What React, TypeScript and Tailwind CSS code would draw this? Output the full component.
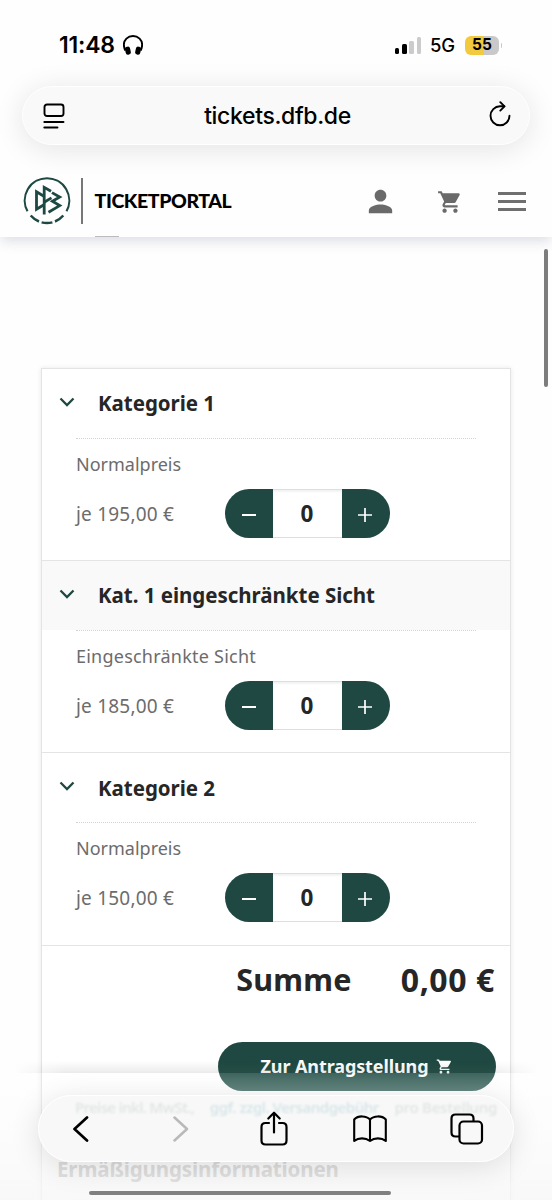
import { useState } from 'react';
import { MdPerson, MdShoppingCart } from 'react-icons/md';

type Category = {
  id: string;
  title: string;
  label: string;
  price: number;
  highlighted?: boolean;
};

const CATEGORIES: Category[] = [
  { id: 'kat1', title: 'Kategorie 1', label: 'Normalpreis', price: 195 },
  { id: 'kat1-sicht', title: 'Kat. 1 eingeschränkte Sicht', label: 'Eingeschränkte Sicht', price: 185, highlighted: true },
  { id: 'kat2', title: 'Kategorie 2', label: 'Normalpreis', price: 150 },
];

function formatPrice(value: number) {
  return `${value.toFixed(2).replace('.', ',')} €`;
}

function StatusBar() {
  return (
    <div className="flex h-[86px] items-start justify-between pl-[59px] pr-[50px] pt-[33px]">
      <div className="flex h-6 items-center gap-[5px]">
        <span className="w-[59px] whitespace-nowrap font-['Inter',sans-serif] text-[23px] font-semibold leading-6 tracking-[-0.2px]">11:48</span>
        <svg width="20" height="20" viewBox="0 0 20 20" fill="none">
          <path d="M2.3 15.5C.2 11 .7 6.5 3.4 3.7 7 .1 13 .1 16.6 3.7 19.3 6.5 19.8 11 17.7 15.5" stroke="#000" strokeWidth="1.9" />
          <rect x="2.3" y="11.7" width="5.2" height="8" rx="2.3" fill="#000" transform="rotate(-12 4.7 15.7)" />
          <rect x="12.5" y="11.7" width="5.2" height="8" rx="2.3" fill="#000" transform="rotate(12 15.3 15.7)" />
        </svg>
      </div>
      <div className="flex h-6 items-center">
        <div className="flex h-[17px] items-end gap-[2.7px]">
          <div className="h-[6px] w-[4.5px] rounded-[1.5px] bg-black" />
          <div className="h-[10px] w-[4.5px] rounded-[1.5px] bg-black" />
          <div className="h-[13px] w-[4.5px] rounded-[1.5px] bg-[#cbcbcb]" />
          <div className="h-[17px] w-[4.5px] rounded-[1.5px] bg-[#cbcbcb]" />
        </div>
        <span className="ml-[9px] w-[26px] whitespace-nowrap font-['Inter',sans-serif] text-[18.5px] font-medium leading-6 tracking-[-0.2px]">5G</span>
        <div className="ml-[9px] flex h-[19px] w-[34px] items-center justify-center rounded-[6px] bg-[linear-gradient(to_right,#f3c93e_56%,#c9c9c9_56%)] font-['Inter',sans-serif] text-[15.5px] font-bold">
          55
        </div>
        <div className="ml-[1.5px] h-[5px] w-[1.5px] rounded-r bg-[#c9c9c9]" />
      </div>
    </div>
  );
}

function AddressBar() {
  return (
    <div className="mx-[22px] flex h-[59px] items-center justify-between rounded-full border border-white bg-[#f9f9f9] pl-[20px] pr-[17px] shadow-[0_4px_30px_rgba(0,0,0,0.11)]">
      <svg width="24" height="26" viewBox="0 0 24 26" fill="none" stroke="#000" strokeWidth="1.9" strokeLinecap="round">
        <rect x="1.5" y="1.5" width="19" height="11.5" rx="2.5" />
        <path d="M1.3 19H20.5M1.3 24.5H14.5" />
      </svg>
      <span className="pt-[2px] font-['Inter',sans-serif] text-[23px] font-medium tracking-[-0.35px]">tickets.dfb.de</span>
      <svg className="-mt-[3px]" width="24" height="26" viewBox="0 0 24 26" fill="none" stroke="#000" strokeWidth="1.9" strokeLinecap="round" strokeLinejoin="round">
        <path d="M21.5 14.8A9.5 9.5 0 1 1 12 5.3H16.3" />
        <path d="M12.3 1.2L16.5 5.4 12.3 9.6" />
      </svg>
    </div>
  );
}

function DfbLogo() {
  return (
    <svg width="48" height="48" viewBox="0 0 48 48" fill="none" stroke="#1d4942">
      <path d="M4.5 34.3A22.3 22.3 0 1 1 43.5 34.3" strokeWidth="2.1" />
      <path d="M7.7 38.5A22.3 22.3 0 0 0 16 44.5M18.6 45.4A22.3 22.3 0 0 0 29.4 45.4M32 44.5A22.3 22.3 0 0 0 40.3 38.5" strokeWidth="2.5" />
      <g strokeWidth="2.8">
        <path d="M20.5 19L13.5 14.8V32.2L20.5 28" />
        <path d="M28 14.2L21.2 10.3V37.5" />
        <path d="M21.2 25.2L28.5 20.9" />
        <path d="M29 15.6L36.7 20 29.4 24.3 36.7 28.6 25.5 35.2" />
      </g>
    </svg>
  );
}

function PortalHeader() {
  return (
    <header className="relative mt-[20px] flex h-[72px] items-start justify-between bg-transparent pl-[23px] pr-[26px] shadow-[0_5px_12px_-1px_rgba(60,70,110,0.18)] [clip-path:inset(0_0_-24px_0)]">
      <div className="flex h-[72px] items-center">
        <DfbLogo />
        <div className="ml-[10px] h-[46px] w-[1.5px] bg-[#777]" />
        <span className="ml-[12px] font-['Lato',sans-serif] text-[19.5px] font-black tracking-[-0.4px]">TICKETPORTAL</span>
      </div>
      <div className="flex h-[72px] items-center text-[#6a6a6a]">
        <MdPerson size={35} />
        <MdShoppingCart size={26} className="ml-[39px] mt-[2px]" />
        <div className="ml-[35px] flex w-[28px] flex-col gap-[5px]">
          <div className="h-[3px] bg-[#6f6f6f]" />
          <div className="h-[3px] bg-[#6f6f6f]" />
          <div className="h-[3px] bg-[#6f6f6f]" />
        </div>
      </div>
      <div className="absolute bottom-0 left-[95px] h-px w-[24px] bg-[#bbb]" />
    </header>
  );
}

function Stepper({ value, onChange }: { value: number; onChange: (value: number) => void }) {
  return (
    <div className="flex h-[49px] w-[165px] overflow-hidden rounded-full">
      <button className="flex w-12 items-center justify-center bg-[#1e4841]" aria-label="Weniger" onClick={() => onChange(Math.max(0, value - 1))}>
        <span className="mt-[3px] h-[2px] w-[14px] bg-white" />
      </button>
      <div className="flex w-[69px] items-center justify-center border-y border-[#dedede] bg-white pr-px text-[22.5px] font-bold shadow-[inset_0_2px_2px_rgba(0,0,0,0.05)]">
        {value}
      </div>
      <button className="flex w-12 items-center justify-center bg-[#1e4841]" aria-label="Mehr" onClick={() => onChange(value + 1)}>
        <svg className="mr-[3px] mt-[3px]" width="14" height="14" viewBox="0 0 14 14" stroke="#fff" strokeWidth="1.7">
          <path d="M7 0V14M0 7H14" />
        </svg>
      </button>
    </div>
  );
}

function CategoryRow({ category, amount, onAmountChange }: { category: Category; amount: number; onAmountChange: (value: number) => void }) {
  return (
    <section className="h-[192.2px] border-b-[1.5px] border-[#e4e4e4]">
      <div className={category.highlighted ? 'flex h-[69px] items-center bg-[#f9f9f9] pl-[17px]' : 'flex h-[69px] items-center pl-[17px]'}>
        <svg className="mb-[3px]" width="16" height="10" viewBox="0 0 16 10" fill="none" stroke="#1e4841" strokeWidth="2.3">
          <path d="M1.5 1.5L8 8 14.5 1.5" />
        </svg>
        <h2 className="ml-[23px] whitespace-nowrap text-[20.5px] font-bold tracking-[-0.03px]">{category.title}</h2>
      </div>
      <div className="mx-[34px] border-t border-dotted border-[#d4d4d4] text-[18px] text-[#6c6c6c]">
        <div className="flex h-[50px] items-center pt-px">
          <span className={category.highlighted ? 'tracking-[0.23px]' : ''}>{category.label}</span>
        </div>
        <div className="flex h-[49px] items-center">
          <span className="w-[149px] whitespace-nowrap pt-px text-[19px] tracking-[0.2px]">je {formatPrice(category.price)}</span>
          <div className="text-[#262626]">
            <Stepper value={amount} onChange={onAmountChange} />
          </div>
        </div>
      </div>
    </section>
  );
}

function BrowserToolbar() {
  return (
    <div className="absolute inset-x-0 bottom-0 h-[127px]">
      <div className="absolute inset-x-[14px] -top-[12px] h-[12px] bg-linear-to-t from-black/8 to-transparent [mask-image:linear-gradient(to_right,transparent,black_10%,black_90%,transparent)]" />
      <div className="absolute inset-0 bg-linear-to-b from-white/10 via-[#fafafa]/50 to-[#f7f7f7]/80" />
      <nav className="absolute left-[38px] top-[22px] flex h-[67px] w-[476px] items-center overflow-hidden rounded-full border border-white bg-[#f8f8f8]/95 shadow-[0_5px_30px_rgba(0,0,0,0.12)]">
        <p className="absolute left-[36px] top-[3px] flex w-[422px] scale-y-90 justify-between whitespace-nowrap text-[15px] font-semibold leading-[18px] text-[#e3e5e5] blur-[1.2px]">
          <span className="tracking-[-0.7px]">Preise inkl. MwSt.,</span>
          <span className="tracking-[-0.5px] text-[#d8e6e8]">ggf. zzgl. Versandgebühr</span>
          <span className="tracking-[-0.3px]">pro Bestellung</span>
        </p>
        <svg className="relative ml-[33px]" width="18" height="26" viewBox="0 0 18 26" fill="none" stroke="#000" strokeWidth="2.7" strokeLinecap="round" strokeLinejoin="round">
          <path d="M15 1.5L2.5 13 15 24.5" />
        </svg>
        <svg className="relative ml-[82px]" width="18" height="26" viewBox="0 0 18 26" fill="none" stroke="#b9b9bb" strokeWidth="2.5" strokeLinecap="round" strokeLinejoin="round">
          <path d="M2.5 1.5L15 13 2.5 24.5" />
        </svg>
        <svg className="relative -top-px ml-[69px]" width="30" height="36" viewBox="0 0 30 36" fill="none" stroke="#000" strokeWidth="2.2" strokeLinecap="round" strokeLinejoin="round">
          <path d="M10 13H6.500Q2.500 13 2.500 17V30.500Q2.500 34.500 6.500 34.500H23.500Q27.500 34.500 27.500 30.500V17Q27.500 13 23.500 13H20M15 22.500V3M9.300 8.500L15 2.700 20.700 8.500" />
        </svg>
        <svg className="relative ml-[64px]" width="34" height="28" viewBox="0 0 34 28" fill="none" stroke="#000" strokeWidth="2.1" strokeLinejoin="round">
          <path d="M17 4.5V26M17 4.5C13.5.5 5 .3 1.2 4.5V26C5.5 22.5 12.5 22.5 17 26 21.5 22.5 28.5 22.5 32.8 26V4.5C29 .3 20.5.5 17 4.5Z" />
        </svg>
        <svg className="relative ml-[63px]" width="34" height="32" viewBox="0 0 34 32" fill="none" stroke="#000" strokeWidth="2.2" strokeLinejoin="round">
          <path d="M9.500 23.500H5.500Q1.500 23.500 1.500 19.500V5.500Q1.500 1.500 5.500 1.500H19.500Q23.500 1.500 23.500 5.500V8" />
          <rect x="9.5" y="8.5" width="22.5" height="22" rx="4" />
        </svg>
      </nav>
      <div className="absolute left-[89px] top-[118px] h-[4px] w-[302px] rounded-full bg-[#808080]" />
    </div>
  );
}

export default function App() {
  const [amounts, setAmounts] = useState<Record<string, number>>({});

  const total = CATEGORIES.reduce((sum, c) => sum + c.price * (amounts[c.id] ?? 0), 0);

  return (
    <div className="relative h-[1200px] w-[552px] overflow-hidden bg-[#fefefe] font-['Noto_Sans',sans-serif] text-[#262626]">
      <div className="text-black">
        <StatusBar />
        <AddressBar />
        <PortalHeader />
      </div>

      {/* Price table */}
      <main className="mx-[41px] mt-[131px] h-[850px] w-[470px] border-[1.5px] border-[#e4e4e4] bg-white shadow-[0_0_5px_rgba(0,0,0,0.09)]">
        {CATEGORIES.map((category) => (
          <CategoryRow
            key={category.id}
            category={category}
            amount={amounts[category.id] ?? 0}
            onAmountChange={(value) => setAmounts({ ...amounts, [category.id]: value })}
          />
        ))}
        <div className="flex h-[68px] items-center justify-end pr-[15px] text-[30.5px] font-bold">
          <span className="tracking-[0.25px]">Summe</span>
          <span className="ml-[49px] text-[32px] tracking-[0.6px]">{formatPrice(total)}</span>
        </div>
        <div className="mt-[28px] flex justify-end pr-[14px]">
          <button className="flex h-[49px] w-[278px] items-center justify-center gap-[8px] rounded-full bg-linear-to-b from-[#1e4841] from-40% to-[#3b665e] text-[18px] font-bold text-white">
            <span className="whitespace-nowrap tracking-[-0.1px]">Zur Antragstellung</span>
            <MdShoppingCart size={17} />
          </button>
        </div>
        <h3 className="ml-[15px] mt-[63px] whitespace-nowrap text-[20.5px] font-bold tracking-[-0.12px] text-[#aaa]">Ermäßigungsinformationen</h3>
      </main>

      {/* Scroll position */}
      <div className="absolute left-[544px] top-[249px] h-[138px] w-[4px] rounded-full bg-[#7d7d7d]" />

      <BrowserToolbar />
    </div>
  );
}
